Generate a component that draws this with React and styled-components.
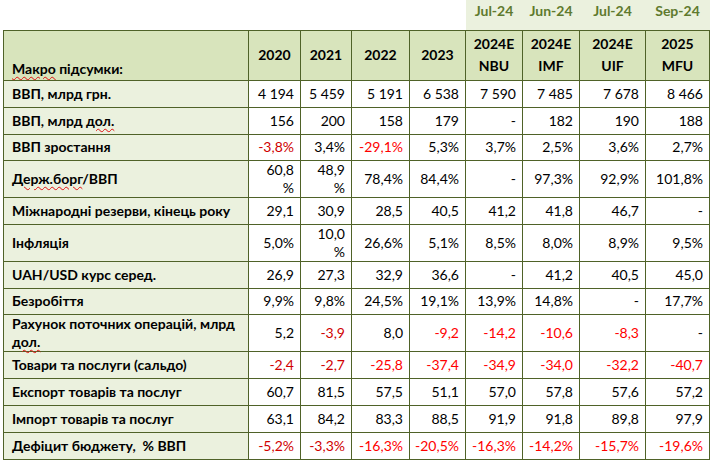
import React from "react";
import styled, { createGlobalStyle } from "styled-components";

const Global = createGlobalStyle`
  html, body { margin: 0; padding: 0; background: #ffffff; }
  body { font-family: Lato, "Open Sans", "Noto Sans", sans-serif; }
`;

const Wrap = styled.div`
  padding-left: 3px;
`;

const Table = styled.table`
  border-collapse: collapse;
  table-layout: fixed;
  width: 707px;
  font-family: Lato, "Noto Sans", sans-serif;
  font-size: 14px;
  color: #000;
`;

const BandRow = styled.tr`
  height: 30px;
`;

const BandCell = styled.td`
  padding: 0 0 9px;
  background: ${(p) => (p.$filled ? "#ebf1de" : "transparent")};
  color: #5f7a2e;
  font-weight: 700;
  text-align: center;
  vertical-align: middle;
  border: none;
`;

const HeadRow = styled.tr`
  height: 50px;
`;

const HeadCell = styled.th`
  background: #d8e4bc;
  border: 1px solid #4f6228;
  font-weight: 700;
  text-align: center;
  vertical-align: middle;
  padding: 0 2px;
  line-height: 22px;
`;

const HeadLabel = styled(HeadCell)`
  text-align: left;
  vertical-align: bottom;
  padding: 0 8px 0;
`;

const Row = styled.tr`
  height: ${(p) => p.$h}px;
`;

const Label = styled.td`
  background: #ebf1de;
  border: 1px solid #4f6228;
  font-weight: 700;
  padding: 0 8px;
  line-height: 18px;
  vertical-align: middle;
  white-space: pre;
`;

const Cell = styled.td`
  background: #ffffff;
  border: 1px solid #4f6228;
  text-align: right;
  padding: 0 6px 0 2px;
  vertical-align: middle;
  line-height: 18px;
  color: ${(p) => (p.$neg ? (p.$dark ? "#d00000" : "#ff0000") : "#000")};
`;

const Squiggle = styled.span`
  text-decoration: underline wavy #e01010;
  text-decoration-thickness: 1px;
  text-underline-offset: 2px;
`;

const cols = [245, 52, 51, 58, 56, 57, 57, 66, 64];

const rows = [
  { h: 27, label: "ВВП, млрд грн.", v: ["4 194", "5 459", "5 191", "6 538", "7 590", "7 485", "7 678", "8 466"] },
  { h: 27, label: <>ВВП, млрд <Squiggle>дол.</Squiggle></>, v: ["156", "200", "158", "179", "-", "182", "190", "188"] },
  { h: 26, label: "ВВП зростання", v: ["-3,8%", "3,4%", "-29,1%", "5,3%", "3,7%", "2,5%", "3,6%", "2,7%"] },
  { h: 36, label: <><Squiggle>Держ.борг</Squiggle>/ВВП</>, v: [["60,8", "%"], ["48,9", "%"], "78,4%", "84,4%", "-", "97,3%", "92,9%", "101,8%"] },
  { h: 27, label: "Міжнародні резерви, кінець року", v: ["29,1", "30,9", "28,5", "40,5", "41,2", "41,8", "46,7", "-"] },
  { h: 37, label: "Інфляція", v: ["5,0%", ["10,0", "%"], "26,6%", "5,1%", "8,5%", "8,0%", "8,9%", "9,5%"] },
  { h: 27, label: "UAH/USD курс серед.", v: ["26,9", "27,3", "32,9", "36,6", "-", "41,2", "40,5", "45,0"] },
  { h: 26, label: "Безробіття", v: ["9,9%", "9,8%", "24,5%", "19,1%", "13,9%", "14,8%", "-", "17,7%"] },
  { h: 36, label: <>Рахунок поточних операцій, млрд<br /><Squiggle>дол.</Squiggle></>, v: ["5,2", "-3,9", "8,0", "-9,2", "-14,2", "-10,6", "-8,3", "-"] },
  { h: 27, label: "Товари та послуги (сальдо)", v: ["-2,4", "-2,7", "-25,8", "-37,4", "-34,9", "-34,0", "-32,2", "-40,7"] },
  { h: 27, label: "Експорт товарів та послуг", v: ["60,7", "81,5", "57,5", "51,1", "57,0", "57,8", "57,6", "57,2"] },
  { h: 27, label: "Імпорт товарів та послуг", v: ["63,1", "84,2", "83,3", "88,5", "91,9", "91,8", "89,8", "97,9"] },
  { h: 27, label: "Дефіцит бюджету,  % ВВП", v: ["-5,2%", "-3,3%", "-16,3%", "-20,5%", "-16,3%", "-14,2%", "-15,7%", "-19,6%"] },
];

const heads = [["2020"], ["2021"], ["2022"], ["2023"], ["2024E", "NBU"], ["2024E", "IMF"], ["2024E", "UIF"], ["2025", "MFU"]];
const bands = ["", "", "", "", "Jul-24", "Jun-24", "Jul-24", "Sep-24"];

export default function App() {
  return (
    <>
      <Global />
      <Wrap>
        <Table>
          <colgroup>
            {cols.map((w, i) => (
              <col key={i} style={{ width: w }} />
            ))}
          </colgroup>
          <tbody>
            <BandRow>
              <BandCell />
              {bands.map((b, i) => (
                <BandCell key={i} $filled={i >= 4}>{b}</BandCell>
              ))}
            </BandRow>
            <HeadRow>
              <HeadLabel>
                <Squiggle>Макро</Squiggle> підсумки:
              </HeadLabel>
              {heads.map((h, i) => (
                <HeadCell key={i}>
                  {h.map((t, j) => (
                    <React.Fragment key={j}>
                      {j > 0 && <br />}
                      {t}
                    </React.Fragment>
                  ))}
                </HeadCell>
              ))}
            </HeadRow>
            {rows.map((r, i) => (
              <Row key={i} $h={r.h}>
                <Label>{r.label}</Label>
                {r.v.map((v, j) => {
                  const txt = Array.isArray(v) ? v[0] : v;
                  const neg = txt.startsWith("-") && txt.length > 1;
                  return (
                    <Cell key={j} $neg={neg} $dark={j < 2}>
                      {Array.isArray(v) ? (
                        <>
                          {v[0]}
                          <br />
                          {v[1]}
                        </>
                      ) : (
                        v
                      )}
                    </Cell>
                  );
                })}
              </Row>
            ))}
          </tbody>
        </Table>
      </Wrap>
    </>
  );
}
